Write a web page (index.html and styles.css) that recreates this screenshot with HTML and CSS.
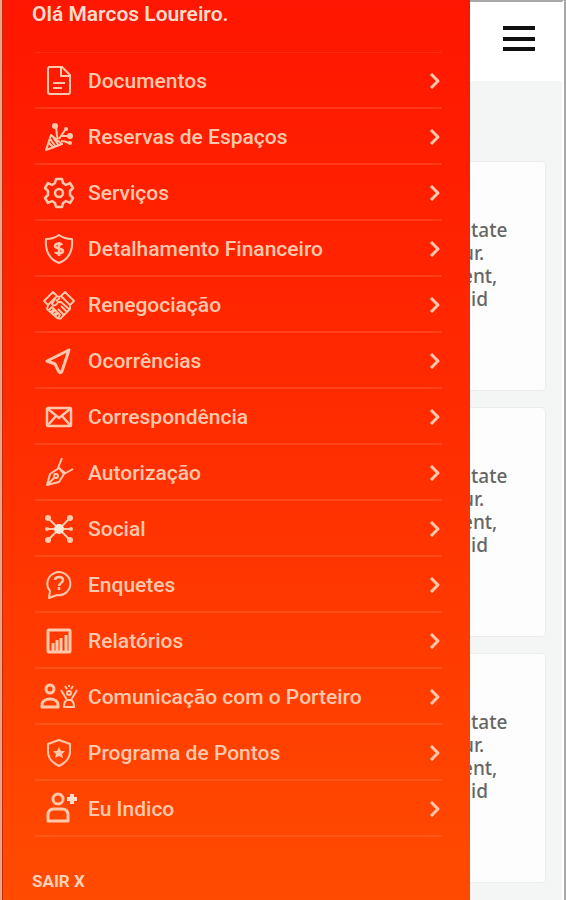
FILE: index.html
```html
<!DOCTYPE html>
<html lang="pt-BR">
<head>
<meta charset="utf-8">
<meta name="viewport" content="width=device-width, initial-scale=1">
<title>Menu</title>
<link rel="stylesheet" href="styles.css">
</head>
<body>
<div class="app">
  <nav class="drawer" aria-label="Menu principal">
    <p class="greeting">Olá Marcos Loureiro.</p>
    <ul class="menu">
      <li><a class="item" href="#documentos">
        <svg class="icon" viewBox="0 0 36 32"><path d="M8 2h13l8 8v17a2 2 0 0 1-2 2H9a2 2 0 0 1-2-2V4a2 2 0 0 1 2-2zM20 3v8h8"/><path d="M12 18h12M12 23h9"/></svg>
        <span>Documentos</span><svg class="chevron" viewBox="0 0 14 20"><path d="M3 3l7 7-7 7"/></svg></a></li>
      <li><a class="item" href="#reservas">
        <svg class="icon" viewBox="0 0 36 32"><path d="M5 29l5-15 11 9zM9 18l6 8M8 22l5 5M12 16l6 9M17 18c-2-4-1-8-2-12M18 18l6-9M20 20c3 0 6 1 8 2M21 15l6 0"/><circle class="solid" cx="14" cy="5" r="3"/><circle class="solid" cx="25" cy="8" r="2"/><circle class="solid" cx="29" cy="15" r="3"/><circle class="solid" cx="29" cy="22" r="2"/></svg>
        <span>Reservas de Espaços</span><svg class="chevron" viewBox="0 0 14 20"><path d="M3 3l7 7-7 7"/></svg></a></li>
      <li><a class="item" href="#servicos">
        <svg class="icon" viewBox="0 0 36 32"><path class="medium" d="M15 2h6l1 4 3 2 4-2 3 5-3 3v4l3 3-3 5-4-2-3 2-1 4h-6l-1-4-3-2-4 2-3-5 3-3v-4l-3-3 3-5 4 2 3-2z"/><circle class="medium" cx="18" cy="16" r="4"/></svg>
        <span>Serviços</span><svg class="chevron" viewBox="0 0 14 20"><path d="M3 3l7 7-7 7"/></svg></a></li>
      <li><a class="item" href="#financeiro">
        <svg class="icon" viewBox="0 0 36 32"><path d="M18 2c4 3 8 4 13 4 1 11-3 20-13 24C8 26 4 17 5 6c5 0 9-1 13-4z"/><path class="medium" d="M21 12c-1-2-7-2-7 1s8 2 8 5-7 3-8 1M18 9v14"/></svg>
        <span>Detalhamento Financeiro</span><svg class="chevron" viewBox="0 0 14 20"><path d="M3 3l7 7-7 7"/></svg></a></li>
      <li><a class="item" href="#renegociacao">
        <svg class="icon" viewBox="0 0 36 32"><path class="thin" d="M3 12L12 3l4 4-9 9zM33 12l-9-9-4 4 9 9zM16 7l2 1 2-1M7 16l-1 4 10 9c2 1 4 1 5-1l8-8v-4M15 8l-4 7c1 3 5 1 6-2l3 0 9 8M20 17l6 6M17 20l6 6M8 21l3-3 2 2-3 3M11 24l3-3 2 2-3 3M14 27l3-3 2 2-2 3M19 9l-4 3"/></svg>
        <span>Renegociação</span><svg class="chevron" viewBox="0 0 14 20"><path d="M3 3l7 7-7 7"/></svg></a></li>
      <li><a class="item" href="#ocorrencias">
        <svg class="icon" viewBox="0 0 36 32"><path class="thick" d="M28 5L6 16l8 3 4 8c1 1 2 1 3-1z"/></svg>
        <span>Ocorrências</span><svg class="chevron" viewBox="0 0 14 20"><path d="M3 3l7 7-7 7"/></svg></a></li>
      <li><a class="item" href="#correspondencia">
        <svg class="icon" viewBox="0 0 36 32"><rect class="medium" x="6" y="7" width="24" height="18" rx="1"/><path class="medium" d="M7 8l11 9L29 8M7 24l8-9M29 24l-8-9"/></svg>
        <span>Correspondência</span><svg class="chevron" viewBox="0 0 14 20"><path d="M3 3l7 7-7 7"/></svg></a></li>
      <li><a class="item" href="#autorizacao">
        <svg class="icon" viewBox="0 0 36 32"><path d="M6 28l3-11 9-6 5 6-5 8zM6 28l8-8M17 11l4-10M23 17l9-5M18 11l6 5"/><circle cx="15" cy="19" r="2"/></svg>
        <span>Autorização</span><svg class="chevron" viewBox="0 0 14 20"><path d="M3 3l7 7-7 7"/></svg></a></li>
      <li><a class="item" href="#social">
        <svg class="icon" viewBox="0 0 36 32"><path d="M7 5l22 22M29 5L7 27M6 16h24"/><circle class="solid bright" cx="18" cy="16" r="5"/><circle class="solid" cx="7" cy="5" r="3"/><circle class="solid" cx="29" cy="5" r="3"/><circle class="solid" cx="7" cy="27" r="3"/><circle class="solid" cx="29" cy="27" r="3"/><circle class="solid" cx="6" cy="16" r="2"/><circle class="solid" cx="30" cy="16" r="2"/></svg>
        <span>Social</span><svg class="chevron" viewBox="0 0 14 20"><path d="M3 3l7 7-7 7"/></svg></a></li>
      <li><a class="item" href="#enquetes">
        <svg class="icon" viewBox="0 0 36 32"><path d="M9 22A11.500 11.500 0 1 1 16 26L8 29z"/><path class="medium" d="M14 11c0-4 8-4 8 0 0 3-4 3-4 6M18 18v3"/></svg>
        <span>Enquetes</span><svg class="chevron" viewBox="0 0 14 20"><path d="M3 3l7 7-7 7"/></svg></a></li>
      <li><a class="item" href="#relatorios">
        <svg class="icon" viewBox="0 0 36 32"><rect class="thick" x="7" y="5" width="22" height="22" rx="1"/><path class="thick" d="M12 26v-8M16 26V15M20 26V13M25 26V10"/></svg>
        <span>Relatórios</span><svg class="chevron" viewBox="0 0 14 20"><path d="M3 3l7 7-7 7"/></svg></a></li>
      <li><a class="item" href="#porteiro">
        <svg class="icon" viewBox="0 0 36 32"><circle class="thick" cx="9" cy="8" r="4"/><path class="thick" d="M1 26v-2c0-8 16-8 16 0v2z"/><circle cx="28" cy="12" r="2"/><path d="M23 26c0-4 1-6 3-7l-6-10M33 26c0-4-1-6-3-7l6-10M22 26h12M25 19h6M24 5l2 3M32 5l-2 3M28 4v2"/></svg>
        <span>Comunicação com o Porteiro</span><svg class="chevron" viewBox="0 0 14 20"><path d="M3 3l7 7-7 7"/></svg></a></li>
      <li><a class="item" href="#pontos">
        <svg class="icon" viewBox="0 0 36 32"><path d="M18 3l11 4v8c0 7-5 11-11 14C12 26 7 22 7 15V7z"/><path class="solid" d="M18 10l2 4 4 0-3 3 1 4-4-2-4 2 1-4-3-3 4 0z"/></svg>
        <span>Programa de Pontos</span><svg class="chevron" viewBox="0 0 14 20"><path d="M3 3l7 7-7 7"/></svg></a></li>
      <li><a class="item" href="#indico">
        <svg class="icon" viewBox="0 0 36 32"><circle class="thick" cx="17" cy="6" r="5"/><path class="thick" d="M7 28v-6c0-4 2-6 6-6h8c4 0 6 2 6 6v6z"/><path class="plus" d="M31 1v10M26 6h10"/></svg>
        <span>Eu Indico</span><svg class="chevron" viewBox="0 0 14 20"><path d="M3 3l7 7-7 7"/></svg></a></li>
    </ul>
    <button class="logout" type="button">SAIR X</button>
  </nav>
  <main class="page">
    <header class="topbar">
      <button class="burger" type="button" aria-label="Menu">
        <svg viewBox="0 0 32 28"><path d="M0 3h32M0 14h32M0 24h32"/></svg>
      </button>
    </header>
    <div class="cards">
      <article class="card"><p>tate</p><p class="cut">ur.</p><p class="cut">ent,</p><p>id</p></article>
      <article class="card"><p>tate</p><p class="cut">ur.</p><p class="cut">ent,</p><p>id</p></article>
      <article class="card"><p>tate</p><p class="cut">ur.</p><p class="cut">ent,</p><p>id</p></article>
    </div>
  </main>
</div>
</body>
</html>
```
FILE: styles.css
```css
* {
  box-sizing: border-box;
}

body {
  margin: 0;
  font-family: Roboto, "Liberation Sans", sans-serif;
  background: #fff;
}

p,
ul {
  margin: 0;
  padding: 0;
}

.app {
  display: grid;
  grid-template-columns: 1fr 94px;
  min-height: 100vh;
  border-left: 2px solid #f3a085;
  border-right: 2px solid #a8a8a8;
}

.drawer {
  display: flex;
  flex-direction: column;
  padding: 0 28px 7px 29px;
  border-left: 1px solid #b8320f;
  background: linear-gradient(#ff1600, #ff2b00 45%, #ff4b00);
  color: #ffc8ac;
}

.greeting {
  padding-bottom: 23px;
  color: #ffdccb;
  font-size: 21px;
  font-weight: 600;
  line-height: 29px;
}

.menu {
  margin-left: 3px;
  list-style: none;
  border-top: 1px solid rgba(255, 170, 120, 0.15);
}

.menu li {
  height: 56px;
  border-bottom: 2px solid rgba(255, 170, 120, 0.2);
}

.item {
  display: flex;
  align-items: center;
  gap: 11px;
  height: 100%;
  padding: 2px 0 0 6px;
  color: inherit;
  font-size: 21px;
  font-weight: 500;
  line-height: 28px;
  text-decoration: none;
}

.item span {
  flex: 1;
}

.icon {
  width: 36px;
  height: 32px;
  overflow: visible;
}

.icon,
.chevron {
  fill: none;
  stroke: currentColor;
  stroke-width: 2;
  stroke-linejoin: round;
}

.thin {
  stroke-width: 1.8;
}

.medium {
  stroke-width: 2.5;
}

.thick {
  stroke-width: 3;
}

.plus {
  stroke: #ffdccb;
  stroke-width: 4;
}

.solid {
  fill: currentColor;
  stroke: none;
}

.bright {
  fill: #ffe6d8;
}

.chevron {
  width: 14px;
  height: 20px;
  stroke-width: 3;
}

.logout {
  align-self: flex-start;
  margin-top: auto;
  padding: 0;
  border: 0;
  background: none;
  color: #ffd2b8;
  font: 700 17px/24px Roboto, "Liberation Sans", sans-serif;
}

.page {
  min-width: 0;
  overflow: hidden;
  border-top: 2px solid #a8a8a8;
  border-right: 2px solid #fff;
  background: #f4f5f5;
}

.topbar {
  display: flex;
  justify-content: flex-end;
  padding: 23px 27px 28px 0;
  background: #fff;
}

.burger {
  padding: 0;
  border: 0;
  background: none;
}

.burger svg {
  display: block;
  width: 32px;
  height: 28px;
  fill: none;
  stroke: #111;
  stroke-width: 4;
}

.cards {
  display: grid;
  gap: 16px;
  padding: 80px 16px 14px 0;
}

.card {
  height: 230px;
  padding-top: 57px;
  border: 1px solid #ececec;
  border-left: 0;
  border-radius: 0 5px 5px 0;
  background: #fdfdfd;
  color: #666;
  font: 500 19px/23px "Noto Sans", sans-serif;
}

.card p {
  padding-left: 1px;
}

.card .cut {
  margin-left: -9px;
}
```
